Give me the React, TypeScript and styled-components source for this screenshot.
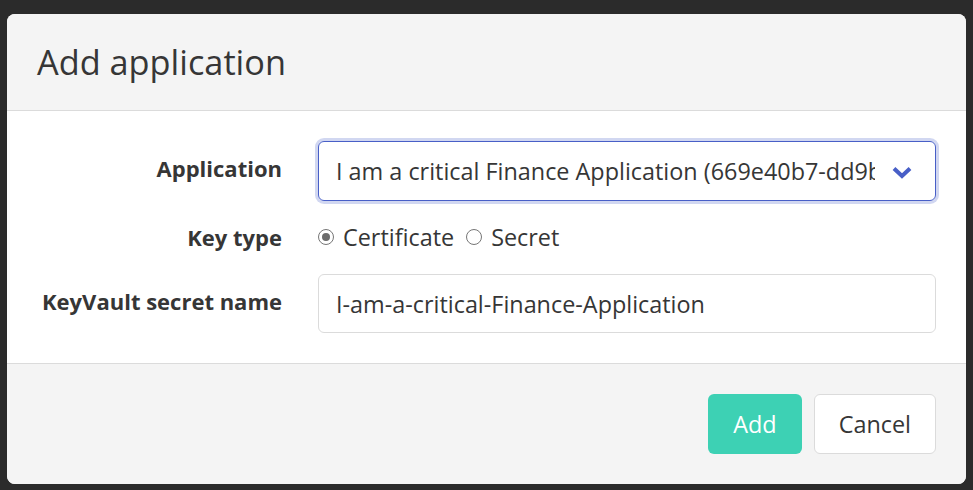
import React from 'react';
import styled, { createGlobalStyle } from 'styled-components';

const GlobalStyle = createGlobalStyle`
  html, body {
    margin: 0;
    padding: 0;
    background: #2b2b2b;
  }
  body {
    font-family: "Open Sans", "Noto Sans", sans-serif;
    font-size: 23.4px;
    line-height: 36px;
    color: #4a4a4a;
  }
`;

const App: React.FC = () => {
    return (
        <>
            <GlobalStyle/>
            <Backdrop>
                <Card>
                    <Head>
                        <Title>Add application</Title>
                    </Head>
                    <Body>
                        <Field>
                            <Label>Application</Label>
                            <Select>
                                <SelectText>
                                    I am a critical Finance Application (669e40b7-dd9b-4c1a-9f3e-2b7d8a5c1e04)
                                </SelectText>
                                <Arrow viewBox="0 0 20 13">
                                    <polyline points="2,2.5 10,10 18,2.5"/>
                                </Arrow>
                            </Select>
                        </Field>
                        <Field gap={19}>
                            <Label small>Key type</Label>
                            <Radios>
                                <RadioLabel>
                                    <RadioDot checked/>
                                    Certificate
                                </RadioLabel>
                                <RadioLabel>
                                    <RadioDot/>
                                    Secret
                                </RadioLabel>
                            </Radios>
                        </Field>
                        <Field gap={0}>
                            <Label>KeyVault secret name</Label>
                            <Input>I-am-a-critical-Finance-Application</Input>
                        </Field>
                    </Body>
                    <Foot>
                        <Button primary>Add</Button>
                        <Button>Cancel</Button>
                    </Foot>
                </Card>
            </Backdrop>
        </>
    );
};

export default App;

const Backdrop = styled.div`
  min-height: 490px;
  box-sizing: border-box;
  padding: 14px 7px 0;
`;
const Card = styled.div`
  width: 959px;
  background: #fff;
  border-radius: 8px;
  overflow: hidden;
`;
const Head = styled.header`
  display: flex;
  align-items: center;
  padding: 30px;
  background: #f4f4f4;
  border-bottom: 1px solid #dbdbdb;
`;
const Title = styled.p`
  margin: 0;
  font-size: 34.3px;
  line-height: 36px;
  color: #363636;
`;
const Body = styled.section`
  padding: 30px;
`;
const Field = styled.div<{ gap?: number }>`
  display: grid;
  grid-template-columns: 245px 1fr;
  column-gap: 36px;
  margin-bottom: ${(p) => (p.gap ?? 18)}px;
`;
const Label = styled.label<{ small?: boolean }>`
  text-align: right;
  font-weight: 700;
  font-size: 22px;
  white-space: nowrap;
  color: #363636;
  padding-top: ${(p) => (p.small ? '0' : '9px')};
`;
const Select = styled.div`
  position: relative;
  min-width: 0;
  height: 60px;
  box-sizing: border-box;
  display: flex;
  align-items: center;
  padding: 0 60px 0 17px;
  border: 1px solid #485fc7;
  border-radius: 6px;
  box-shadow: 0 0 0 3px rgba(72, 95, 199, 0.25);
  color: #363636;
`;
const SelectText = styled.span`
  flex: 1;
  min-width: 0;
  overflow: hidden;
  white-space: nowrap;
`;
const Arrow = styled.svg`
  position: absolute;
  right: 23px;
  top: 24px;
  width: 20px;
  height: 13px;
  fill: none;
  stroke: #485fc7;
  stroke-width: 4;
`;
const Radios = styled.div`
  display: flex;
  align-items: center;
  gap: 12px;
  color: #363636;
`;
const RadioLabel = styled.label`
  display: inline-flex;
  align-items: center;
  gap: 9px;
`;
const RadioDot = styled.span<{ checked?: boolean }>`
  box-sizing: border-box;
  width: 16px;
  height: 16px;
  border-radius: 50%;
  border: 1px solid #767676;
  display: inline-flex;
  align-items: center;
  justify-content: center;
  &::after {
    content: '';
    display: ${(p) => (p.checked ? 'block' : 'none')};
    width: 8px;
    height: 8px;
    border-radius: 50%;
    background: #6b6b6b;
  }
`;
const Input = styled.div`
  min-width: 0;
  height: 59px;
  box-sizing: border-box;
  display: flex;
  align-items: center;
  padding: 0 17px;
  border: 1px solid #dbdbdb;
  border-radius: 6px;
  color: #363636;
`;
const Foot = styled.footer`
  display: flex;
  justify-content: flex-end;
  gap: 12px;
  padding: 30px;
  background: #f4f4f4;
  border-top: 1px solid #dbdbdb;
`;
const Button = styled.button<{ primary?: boolean }>`
  font-family: inherit;
  font-size: 23.4px;
  height: 60px;
  padding: 0 24px;
  border-radius: 6px;
  cursor: pointer;
  border: 1px solid ${(p) => (p.primary ? 'transparent' : '#dbdbdb')};
  background: ${(p) => (p.primary ? '#3dd1b4' : '#fff')};
  color: ${(p) => (p.primary ? '#fff' : '#363636')};
`;
